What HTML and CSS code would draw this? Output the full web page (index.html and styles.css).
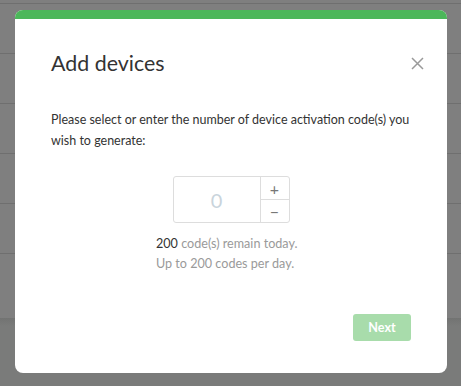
FILE: index.html
```html
<!DOCTYPE html>
<html>
<head>
<meta charset="utf-8">
<link rel="stylesheet" href="styles.css">
</head>
<body>
<div class="page">
  <div class="rows">
    <div class="row first"></div>
    <div class="row"></div>
    <div class="row"></div>
    <div class="row"></div>
    <div class="row"></div>
    <div class="row"></div>
    <div class="row last"></div>
  </div>
  <div class="footer-area"></div>
</div>
<div class="modal">
  <div class="modal-bar"></div>
  <div class="modal-body">
    <div class="modal-header">
      <h2 class="modal-title">Add devices</h2>
      <button class="close" aria-label="Close">
        <svg width="13" height="13" viewBox="0 0 13 13"><path d="M1 1 L12 12 M12 1 L1 12" stroke="#9a9a9a" stroke-width="1.5" fill="none"/></svg>
      </button>
    </div>
    <p class="desc">Please select or enter the number of device activation code(s) you wish to generate:</p>
    <div class="counter">
      <div class="stepper">
        <div class="stepper-value">0</div>
        <div class="stepper-buttons">
          <div class="step">+</div>
          <div class="step">&minus;</div>
        </div>
      </div>
      <div class="info">
        <div><span class="strong">200</span> code(s) remain today.</div>
        <div>Up to 200 codes per day.</div>
      </div>
    </div>
    <div class="actions">
      <button class="next">Next</button>
    </div>
  </div>
</div>
</body>
</html>
```

FILE: styles.css
```css
html, body {
  margin: 0;
  padding: 0;
}
body {
  width: 461px;
  height: 386px;
  overflow: hidden;
  background: #7a7b7a;
  font-family: Lato, "Open Sans", sans-serif;
}
.page {
  display: flex;
  flex-direction: column;
  height: 386px;
}
.rows {
  background: #7f7f7f;
  height: 318px;
  display: flex;
  flex-direction: column;
}
.row {
  height: 49px;
  border-bottom: 1px solid #6f6f6f;
}
.row.first {
  height: 3px;
}
.row.last {
  border-bottom: none;
  flex: 1;
}
.footer-area {
  flex: 1;
  background: linear-gradient(#727372, #7a7b7a 8px);
}
.modal {
  position: absolute;
  left: 15px;
  top: 10px;
  width: 432px;
  height: 363px;
  background: #fff;
  border-radius: 8px;
  overflow: hidden;
  display: flex;
  flex-direction: column;
}
.modal-bar {
  height: 9px;
  background: #4cb75a;
}
.modal-body {
  flex: 1;
  display: flex;
  flex-direction: column;
  padding: 31px 36px 32px 36px;
}
.modal-header {
  display: flex;
  justify-content: space-between;
  align-items: center;
}
.modal-title {
  margin: 0;
  font-size: 21.4px;
  font-weight: 400;
  line-height: 26px;
  color: #333;
}
.close {
  border: none;
  background: none;
  padding: 0;
  margin-right: -13px;
  display: flex;
}
.desc {
  margin: 33px 0 0 0;
  font-size: 12.5px;
  line-height: 21px;
  color: #333;
}
.counter {
  margin-top: 25px;
  display: flex;
  flex-direction: column;
  align-items: center;
}
.stepper {
  display: flex;
  width: 117px;
  height: 47px;
  box-sizing: border-box;
  border: 1px solid #ddd;
  border-radius: 3px;
}
.stepper-value {
  flex: 1;
  display: flex;
  align-items: center;
  justify-content: center;
  font-size: 20px;
  color: #c9d4dc;
  border-right: 1px solid #ddd;
}
.stepper-buttons {
  width: 28px;
  display: flex;
  flex-direction: column;
}
.step {
  flex: 1;
  display: flex;
  align-items: center;
  justify-content: center;
  font-size: 16px;
  color: #777;
}
.step + .step {
  border-top: 1px solid #ddd;
}
.info {
  width: 150px;
  margin-top: 11px;
  font-size: 12.6px;
  line-height: 20px;
  color: #9a9a9a;
}
.strong {
  color: #333;
}
.actions {
  margin-top: auto;
  display: flex;
  justify-content: flex-end;
}
.next {
  width: 58px;
  height: 27px;
  border: none;
  border-radius: 3px;
  background: #a8dcab;
  color: #fff;
  font-family: Lato, sans-serif;
  font-weight: 700;
  font-size: 12.6px;
  padding: 0;
}
```
